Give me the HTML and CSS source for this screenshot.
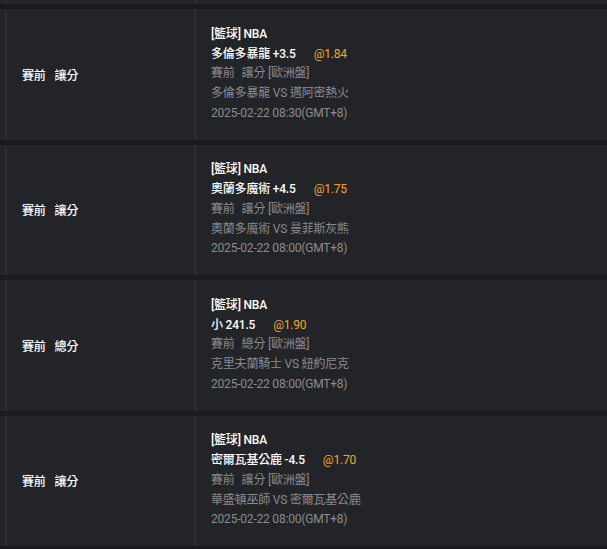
FILE: index.html
```html
<!DOCTYPE html>
<html lang="zh-Hant">
<head>
<meta charset="utf-8">
<link rel="stylesheet" href="styles.css">
</head>
<body>
<div class="list">
  <div class="row row-top">
    <div class="type"></div>
    <div class="info"></div>
  </div>
  <div class="row">
    <div class="type">賽前<span class="sp"></span>讓分</div>
    <div class="info">
      <div class="l1">[籃球] NBA</div>
      <div class="l1">多倫多暴龍 +3.5<span class="odds">@1.84</span></div>
      <div class="l3">賽前<span class="sp2"></span>讓分 [歐洲盤]</div>
      <div class="l3">多倫多暴龍 VS 邁阿密熱火</div>
      <div class="l3">2025-02-22 08:30(GMT+8)</div>
    </div>
  </div>
  <div class="row">
    <div class="type">賽前<span class="sp"></span>讓分</div>
    <div class="info">
      <div class="l1">[籃球] NBA</div>
      <div class="l1">奧蘭多魔術 +4.5<span class="odds">@1.75</span></div>
      <div class="l3">賽前<span class="sp2"></span>讓分 [歐洲盤]</div>
      <div class="l3">奧蘭多魔術 VS 曼菲斯灰熊</div>
      <div class="l3">2025-02-22 08:00(GMT+8)</div>
    </div>
  </div>
  <div class="row">
    <div class="type">賽前<span class="sp"></span>總分</div>
    <div class="info">
      <div class="l1">[籃球] NBA</div>
      <div class="l1">小 241.5<span class="odds">@1.90</span></div>
      <div class="l3">賽前<span class="sp2"></span>總分 [歐洲盤]</div>
      <div class="l3">克里夫蘭騎士 VS 紐約尼克</div>
      <div class="l3">2025-02-22 08:00(GMT+8)</div>
    </div>
  </div>
  <div class="row">
    <div class="type">賽前<span class="sp"></span>讓分</div>
    <div class="info">
      <div class="l1">[籃球] NBA</div>
      <div class="l1">密爾瓦基公鹿 -4.5<span class="odds">@1.70</span></div>
      <div class="l3">賽前<span class="sp2"></span>讓分 [歐洲盤]</div>
      <div class="l3">華盛頓巫師 VS 密爾瓦基公鹿</div>
      <div class="l3">2025-02-22 08:00(GMT+8)</div>
    </div>
  </div>
</div>
</body>
</html>
```

FILE: styles.css
```css
html, body {
  margin: 0;
  padding: 0;
  background: #1b1c20;
  overflow: hidden;
}
body {
  font-family: Roboto, "Noto Sans CJK TC", sans-serif;
  font-size: 12px;
  letter-spacing: -0.2px;
  color: #ffffff;
}
.list {
  display: flex;
  flex-direction: column;
  gap: 5px;
}
.row {
  display: flex;
  flex: none;
  height: 130.5px;
  background: #232428;
  padding-left: 5px;
}
.row-top {
  height: 4px;
}
.type {
  width: 172px;
  border-left: 2px solid #2d2e33;
  padding-left: 15px;
  display: flex;
  align-items: center;
  font-weight: 500;
  color: #ffffff;
}
.sp {
  display: inline-block;
  width: 9px;
}
.sp2 {
  display: inline-block;
  width: 7px;
}
.info {
  flex: 1;
  border-left: 2px solid #2d2e33;
  padding-left: 15px;
  display: flex;
  flex-direction: column;
  justify-content: center;
}
.info > div {
  line-height: 19.75px;
  white-space: nowrap;
}
.l1 {
  color: #ffffff;
  font-weight: 500;
}
.l3 {
  color: #8a8b8f;
}
.odds {
  color: #f5a623;
  font-weight: 400;
  margin-left: 18px;
}
```
